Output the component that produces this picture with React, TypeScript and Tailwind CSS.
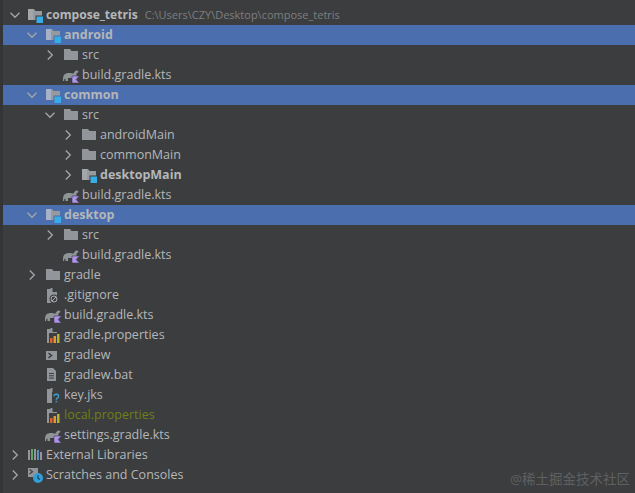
const sans = "font-['Open_Sans','Noto_Sans_CJK_SC',sans-serif]";

type Kind = "module" | "root" | "folder" | "source" | "kts" | "ignore" | "props" | "shell" | "bat" | "jks" | "libs" | "scratch";

type Row = {
  name: string;
  indent: number;
  icon: Kind;
  open?: boolean;
  leaf?: boolean;
  selected?: boolean;
  bold?: boolean;
  hint?: string;
  muted?: boolean;
};

const rows: Row[] = [
  { name: "compose_tetris", indent: 0, icon: "root", open: true, bold: true, hint: "C:\\Users\\CZY\\Desktop\\compose_tetris" },
  { name: "android", indent: 1, icon: "module", open: true, selected: true, bold: true },
  { name: "src", indent: 2, icon: "folder" },
  { name: "build.gradle.kts", indent: 2, icon: "kts", leaf: true },
  { name: "common", indent: 1, icon: "module", open: true, selected: true, bold: true },
  { name: "src", indent: 2, icon: "folder", open: true },
  { name: "androidMain", indent: 3, icon: "folder" },
  { name: "commonMain", indent: 3, icon: "folder" },
  { name: "desktopMain", indent: 3, icon: "source", bold: true },
  { name: "build.gradle.kts", indent: 2, icon: "kts", leaf: true },
  { name: "desktop", indent: 1, icon: "module", open: true, selected: true, bold: true },
  { name: "src", indent: 2, icon: "folder" },
  { name: "build.gradle.kts", indent: 2, icon: "kts", leaf: true },
  { name: "gradle", indent: 1, icon: "folder" },
  { name: ".gitignore", indent: 1, icon: "ignore", leaf: true },
  { name: "build.gradle.kts", indent: 1, icon: "kts", leaf: true },
  { name: "gradle.properties", indent: 1, icon: "props", leaf: true },
  { name: "gradlew", indent: 1, icon: "shell", leaf: true },
  { name: "gradlew.bat", indent: 1, icon: "bat", leaf: true },
  { name: "key.jks", indent: 1, icon: "jks", leaf: true },
  { name: "local.properties", indent: 1, icon: "props", leaf: true, muted: true },
  { name: "settings.gradle.kts", indent: 1, icon: "kts", leaf: true },
  { name: "External Libraries", indent: 0, icon: "libs" },
  { name: "Scratches and Consoles", indent: 0, icon: "scratch" },
];

function Arrow({ open }: { open?: boolean }) {
  return (
    <svg width="12" height="12" viewBox="0 0 12 12" fill="none" stroke="#a3a6a8" strokeWidth="1.3">
      {open ? <path d="M1.5 3.800 6 8.300l4.500-4.500" /> : <path d="M3.800 1.500 8.300 6l-4.500 4.500" />}
    </svg>
  );
}

const FILE = "M3 3h3.500v-1h2v4H13v11H3z";

function FileIcon({ icon, selected }: { icon: Kind; selected?: boolean }) {
  switch (icon) {
    case "root":
    case "module":
    case "source":
      return (
        <svg width="18" height="18" viewBox="0 0 18 18">
          <path d="M2 3h6l1.500 2H16v9H2z" fill="#959a9e" />
          <path d="M2 3h5v11H2z" fill={selected ? "#a7b2c8" : "#a3a7aa"} />
          <rect x="9.500" y="9.500" width="8" height="8" fill={selected ? "#4b6eaf" : "#3c3e40"} />
          <rect x="10.500" y="10.500" width="6.500" height="6.500" fill="#38ace6" />
        </svg>
      );
    case "folder":
      return (
        <svg width="18" height="18" viewBox="0 0 18 18">
          <path d="M2 3h6l1.500 2H16v9H2z" fill="#92969a" />
        </svg>
      );
    case "kts":
      return (
        <svg width="18" height="18" viewBox="0 0 18 18">
          <path d="M1 13c0-4 2-6 6-6 2 0 3 .6 4 .6s1.500-2.600 3-3.100c1.500-.4 2.500.5 2.500 1.500l-2 1.500V15H10v-3H6v3H3.500v-2.500C2.500 12.500 2 13.500 2 15H1z" fill="#8f9497" />
          <path d="M10 10h7.500l-3.500 3.500 3.500 3.500H10z" fill="#b393f2" stroke="#3c3e40" strokeWidth="0.6" />
        </svg>
      );
    case "ignore":
      return (
        <svg width="18" height="18" viewBox="0 0 18 18">
          <path d={FILE} fill="#92969a" />
          <circle cx="10" cy="13" r="4.500" fill="#3c3e40" />
          <circle cx="10" cy="13" r="3" fill="none" stroke="#a9abad" strokeWidth="1" />
          <path d="M8 15l4-4" stroke="#a9abad" strokeWidth="1" />
        </svg>
      );
    case "props":
      return (
        <svg width="18" height="18" viewBox="0 0 18 18">
          <path d={FILE} fill="#92969a" />
          <rect x="5" y="7" width="11" height="10" fill="#3c3e40" />
          <rect x="6" y="12" width="2.500" height="5" fill="#d9642c" />
          <rect x="9.500" y="10" width="2.500" height="7" fill="#e09a30" />
          <rect x="13" y="8" width="2.500" height="9" fill="#b8b030" />
        </svg>
      );
    case "shell":
      return (
        <svg width="18" height="18" viewBox="0 0 18 18">
          <rect x="2" y="5" width="11" height="9" fill="#92969a" />
          <path d="M4.500 7.200 7.500 9.500 4.500 11.800" fill="none" stroke="#3c3e40" strokeWidth="1.500" />
        </svg>
      );
    case "bat":
      return (
        <svg width="18" height="18" viewBox="0 0 18 18">
          <path d="M3 2h6l3 3v10H3z" fill="#92969a" />
          <path d="M5 7.500h5M5 9.800h5M5 12.100h5" stroke="#3c3e40" strokeWidth="1" />
        </svg>
      );
    case "jks":
      return (
        <svg width="18" height="18" viewBox="0 0 18 18">
          <path d={FILE} fill="#92969a" />
          <rect x="8" y="6" width="9" height="12" fill="#3c3e40" />
          <path d="M10 10.200c0-2.700 4.600-2.700 4.600 0 0 1.900-2.300 1.900-2.300 3.600" fill="none" stroke="#3d9fd0" strokeWidth="1.400" />
          <rect x="11.600" y="14.800" width="1.500" height="1.500" fill="#3d9fd0" />
        </svg>
      );
    case "libs":
      return (
        <svg width="18" height="18" viewBox="0 0 18 18">
          <rect x="2" y="4" width="2" height="10" fill="#92969a" />
          <rect x="5" y="3" width="2" height="11" fill="#62a36a" />
          <rect x="8" y="3" width="2" height="11" fill="#92969a" />
          <rect x="11" y="4" width="2" height="10" fill="#5c8fc4" />
          <rect x="14" y="6" width="2" height="8" fill="#92969a" />
        </svg>
      );
    case "scratch":
      return (
        <svg width="18" height="18" viewBox="0 0 18 18">
          <rect x="2" y="2" width="10" height="9" fill="#92969a" />
          <path d="M3.500 3.500l3 2.200-3 2.200" fill="none" stroke="#3c3e40" strokeWidth="1.200" />
          <circle cx="12" cy="12" r="5" fill="#339fd8" />
          <path d="M12 9.200v3.300l2 1" fill="none" stroke="#173f58" strokeWidth="1.100" />
        </svg>
      );
  }
}

function TreeRow({ row }: { row: Row }) {
  const pad = row.indent === 0 ? "pl-[3px]" : row.indent === 1 ? "pl-[21px]" : row.indent === 2 ? "pl-[39px]" : "pl-[57px]";
  const root = row.icon === "root";
  return (
    <div className={`flex h-5 items-center whitespace-nowrap ${pad} ${row.selected ? "bg-[#4b6eaf]" : ""}`}>
      <span className="flex w-5 shrink-0">
        <span className={`flex justify-center ${row.indent === 0 ? "w-[18px]" : "w-4"}`}>
          {row.leaf ? null : <Arrow open={row.open} />}
        </span>
      </span>
      <span className="flex w-[18px] shrink-0 justify-center">
        <FileIcon icon={row.icon} selected={row.selected} />
      </span>
      <span
        className={`ml-[2px] leading-5 ${root ? "text-[12.1px]" : "text-[12.5px]"} ${row.bold ? "font-bold" : ""} ${
          row.muted ? "text-[#6e7f14]" : "text-[#b4b7b9]"
        }`}
      >
        {row.name}
      </span>
      {row.hint ? <span className="ml-[7px] text-[11px] leading-5 text-[#7d7f80]">{row.hint}</span> : null}
    </div>
  );
}

export default function App() {
  return (
    <div className={`relative flex h-[493px] w-[635px] overflow-hidden bg-[#3c3d3f] ${sans}`}>
      <div className="w-[3px] shrink-0 bg-[#333537]" />
      <div className="flex min-w-0 flex-1 flex-col pt-[5px]">
        {rows.map((row, i) => (
          <TreeRow key={i} row={row} />
        ))}
      </div>
      <div className="absolute bottom-[4px] right-[5px] text-[13.5px] text-[#5e6062]">@稀土掘金技术社区</div>
    </div>
  );
}
